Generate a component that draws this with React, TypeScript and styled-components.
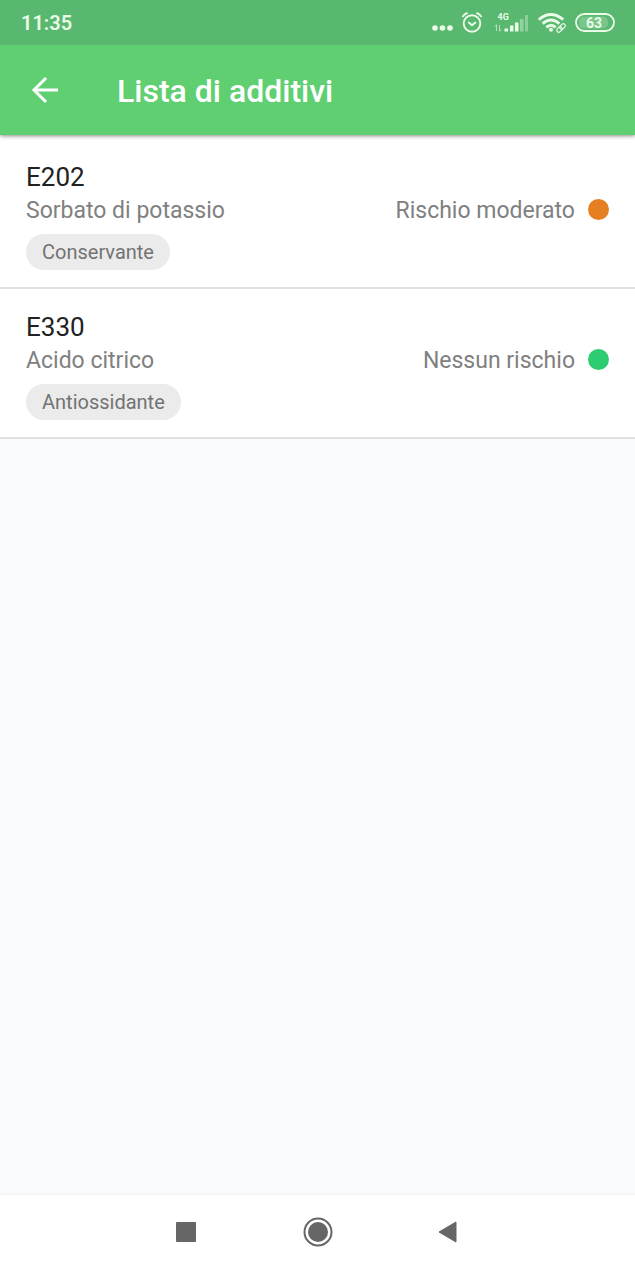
import React from "react";
import styled, { createGlobalStyle } from "styled-components";

const GlobalStyle = createGlobalStyle`
  *, *::before, *::after { box-sizing: border-box; }
  body {
    margin: 0;
    background: #f8fafc;
    font-family: Roboto, "Liberation Sans", sans-serif;
  }
  h1, h2, p, ul { margin: 0; padding: 0; }
`;

const Screen = styled.div`
  display: flex;
  flex-direction: column;
  min-height: 100vh;
`;

const StatusBar = styled.div`
  display: flex;
  align-items: center;
  justify-content: space-between;
  height: 45px;
  padding: 0 20px 0 21px;
  background: #59b86f;
  color: #eafbe8;
  z-index: 2;
`;

const Clock = styled.time`
  font-size: 20px;
  line-height: 24px;
  font-weight: 600;
`;

const StatusIcons = styled.div`
  display: flex;
  align-items: center;
  gap: 9px;

  svg { display: block; }
`;

const AppBar = styled.header`
  display: flex;
  align-items: center;
  gap: 45px;
  height: 90px;
  padding: 0 18px;
  background: #5fcf72;
  color: #fff;
  box-shadow: 0 1px 4px rgba(0, 0, 0, 0.45);
  z-index: 1;
`;

const IconButton = styled.button`
  display: flex;
  align-items: center;
  justify-content: center;
  width: 54px;
  height: 54px;
  padding: 0;
  border: 0;
  background: none;
  color: inherit;
`;

const Title = styled.h1`
  padding-top: 2px;
  font-size: 32px;
  line-height: 40px;
  font-weight: 500;
`;

const Content = styled.main`
  flex: 1;
`;

const AdditiveList = styled.ul`
  list-style: none;
  padding-top: 4px;
  background: #fff;
`;

const AdditiveRow = styled.li`
  padding: 21px 26px 17px;
  border-bottom: 2px solid #e1e1e1;
`;

const Code = styled.h2`
  font-size: 26px;
  line-height: 34px;
  font-weight: 400;
  color: #212121;
`;

const Details = styled.div`
  display: flex;
  align-items: center;
  justify-content: space-between;
  font-size: 23px;
  line-height: 34px;
  color: #808080;
`;

const Risk = styled.p`
  display: flex;
  align-items: center;
  gap: 13px;
`;

const RiskDot = styled.span<{ $color: string }>`
  width: 21px;
  height: 21px;
  margin-bottom: 4px;
  border-radius: 50%;
  background: ${({ $color }) => $color};
`;

const Chip = styled.span`
  display: block;
  width: fit-content;
  margin-top: 6px;
  padding: 0 16px;
  border-radius: 18px;
  background: #ebebeb;
  color: #737373;
  font-size: 20px;
  line-height: 36px;
`;

const NavBar = styled.nav`
  display: flex;
  align-items: center;
  justify-content: center;
  gap: 78px;
  height: 76px;
  padding-bottom: 1px;
  border-top: 1px solid #f1f3f4;
  background: #fff;
  color: #666;
`;

const additives = [
  { code: "E202", name: "Sorbato di potassio", kind: "Conservante", risk: "Rischio moderato", color: "#e67e22" },
  { code: "E330", name: "Acido citrico", kind: "Antiossidante", risk: "Nessun rischio", color: "#2ecc71" },
];

const MoreIcon = () => (
  <svg width="22" height="24" viewBox="0 0 22 24" fill="currentColor" aria-hidden="true">
    <circle cx="4" cy="17" r="2.8" />
    <circle cx="11.500" cy="17" r="2.8" />
    <circle cx="19" cy="17" r="2.8" />
  </svg>
);

const AlarmIcon = () => (
  <svg width="22" height="24" viewBox="0 0 22 24" fill="none" stroke="currentColor" strokeWidth="1.9" strokeLinecap="round" aria-hidden="true">
    <circle cx="10" cy="12.500" r="8.300" />
    <path d="M6.800 11.500 10 14.300 13.400 11.500" strokeLinejoin="round" />
    <path d="M1 5.300Q2.200 2.900 5 2.300M19 5.300Q17.800 2.900 15 2.300" />
  </svg>
);

const SignalIcon = () => (
  <svg width="36" height="24" viewBox="0 0 36 24" fill="currentColor" role="img" aria-label="4G">
    <text x="4.500" y="9" fontSize="9" fontWeight="700">4G</text>
    <path d="M3.500 20v-6M2 15.500l1.500-2M6.500 14v6M8 18.500l-1.500 2" fill="none" stroke="currentColor" opacity="0.6" />
    <rect x="11.500" y="17.500" width="3.500" height="3" />
    <rect x="17" y="14.500" width="3.500" height="6" />
    <rect x="22" y="11.500" width="3.500" height="9" />
    <rect x="27" y="8" width="3.500" height="12.500" opacity="0.4" />
    <rect x="32" y="4" width="3" height="16.500" opacity="0.35" />
  </svg>
);

const WifiIcon = () => (
  <svg width="28" height="24" viewBox="0 0 28 24" fill="none" stroke="currentColor" strokeWidth="2.800" aria-hidden="true">
    <path d="M.8 8.600Q13 -1.600 25.200 8.600M4.600 12.600Q13 5.300 21.400 12.600M8.300 16.400Q13 12.200 17.700 16.400" />
    <circle cx="13" cy="18.800" r="2" fill="currentColor" stroke="none" />
    <g strokeWidth="1.200" transform="rotate(-45 23 17)">
      <rect x="17.800" y="15" width="6" height="4" rx="2" />
      <rect x="22.200" y="15" width="6" height="4" rx="2" />
    </g>
  </svg>
);

const BatteryIcon = () => (
  <svg width="40" height="24" viewBox="0 0 40 24" role="img" aria-label="63">
    <rect x="4" y="5.500" width="29" height="12" rx="5" fill="currentColor" opacity="0.22" />
    <rect x="1" y="3" width="38" height="17" rx="8.500" fill="none" stroke="currentColor" strokeWidth="1.800" />
    <text x="19" y="16.500" fontSize="14" fontWeight="700" textAnchor="middle" fill="currentColor">63</text>
  </svg>
);

const BackArrow = () => (
  <svg width="28" height="28" viewBox="0 0 28 28" fill="none" stroke="currentColor" strokeWidth="3" aria-hidden="true">
    <path d="M27 14H3M15 2 3 14l12 12" />
  </svg>
);

export default function App() {
  return (
    <Screen>
      <GlobalStyle />
      <StatusBar>
        <Clock>11:35</Clock>
        <StatusIcons>
          <MoreIcon />
          <AlarmIcon />
          <SignalIcon />
          <WifiIcon />
          <BatteryIcon />
        </StatusIcons>
      </StatusBar>
      <AppBar>
        <IconButton aria-label="Indietro"><BackArrow /></IconButton>
        <Title>Lista di additivi</Title>
      </AppBar>
      <Content>
        <AdditiveList>
          {additives.map((a) => (
            <AdditiveRow key={a.code}>
              <Code>{a.code}</Code>
              <Details>
                <p>{a.name}</p>
                <Risk>{a.risk}<RiskDot $color={a.color} /></Risk>
              </Details>
              <Chip>{a.kind}</Chip>
            </AdditiveRow>
          ))}
        </AdditiveList>
      </Content>
      <NavBar aria-label="Sistema">
        <IconButton aria-label="App recenti">
          <svg width="20" height="20" viewBox="0 0 20 20" fill="currentColor" aria-hidden="true"><rect width="20" height="20" rx="1" /></svg>
        </IconButton>
        <IconButton aria-label="Home">
          <svg width="30" height="30" viewBox="0 0 30 30" aria-hidden="true">
            <circle cx="15" cy="15" r="13.500" fill="none" stroke="currentColor" strokeWidth="2" />
            <circle cx="15" cy="15" r="10" fill="currentColor" />
          </svg>
        </IconButton>
        <IconButton aria-label="Indietro">
          <svg width="24" height="24" viewBox="0 0 24 24" fill="currentColor" stroke="currentColor" strokeLinejoin="round" aria-hidden="true"><path d="M18 2v20L1 12z" /></svg>
        </IconButton>
      </NavBar>
    </Screen>
  );
}
